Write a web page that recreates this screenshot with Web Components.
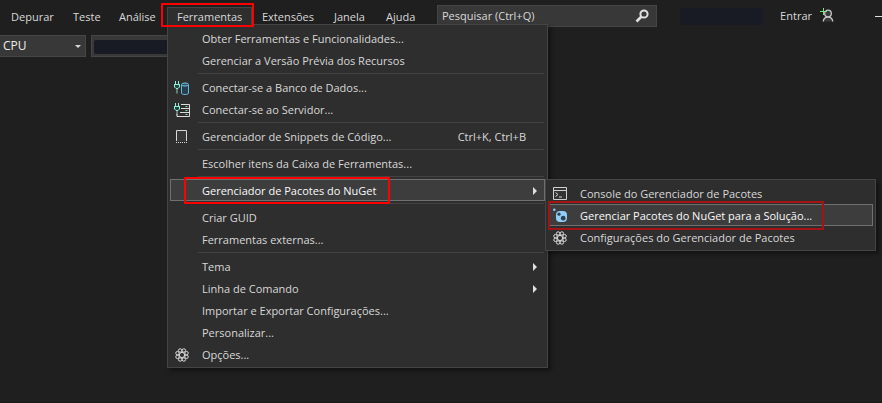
<!DOCTYPE html>
<html lang="pt-BR">
<head>
<meta charset="utf-8">
<title>Ferramentas</title>
<style>
  body {
    margin: 0;
    min-height: 100vh;
    background: #1f1f1f;
    color: #d8d8d8;
    font: 11px/16px "Open Sans", "Noto Sans", sans-serif;
    overflow: hidden;
  }
</style>
</head>
<body>
<ide-window></ide-window>

<script>
const GEAR = (() => {
  let s = '';
  for (let i = 0; i < 8; i++) {
    const a = (i + .5) * Math.PI / 4;
    s += `<circle cx="${(8 + 4.9 * Math.cos(a)).toFixed(2)}" cy="${(8 + 4.9 * Math.sin(a)).toFixed(2)}" r="1.7"/>`;
  }
  return `<g fill="none" stroke="#dcdcdc" stroke-width="1">${s}<circle cx="8" cy="8" r="2.6"/></g>`;
})();

const PLUG = '<path d="M1.500 1v3M4.500 1v3" stroke="#8ff0da" fill="none"/><path d="M0 4.500h6M.5 4.500v2.500l1.500 1.500h2l1.500-1.500v-2.500" stroke="#8ff0da" fill="#23453f"/><path d="M3 8.500v5" stroke="#9cc8c0" fill="none"/>';

const ICONS = {
  database: PLUG + '<path d="M7.500 5v8c0 1 1.500 1.500 3.500 1.500s3.500-.5 3.500-1.500v-8" fill="#23404f" stroke="#6cb8dd"/><ellipse cx="11" cy="4.500" rx="3.500" ry="1.500" fill="#2a5062" stroke="#78c8ee"/>',
  server: PLUG + '<path d="M7 2.500h8.500v12H3M7 6.500h8.500M6 10.500h9.500M3 12v2.500" fill="none" stroke="#dcdcdc"/><path d="M11.500 4.500h2M11.500 8.500h2M11.500 12.500h2" stroke="#8adf9a"/>',
  snippet: '<path d="M2.500 12V1.500h10V12" fill="#383838" stroke="#d8d8d8"/><path d="M2 13.500h11" stroke="#d8d8d8" stroke-dasharray="1 1"/>',
  console: '<path d="M1.500 1.500h13v12h-13z" fill="#333" stroke="#d0d0d0"/><path d="M1.500 4.500h13" stroke="#d0d0d0"/><path d="M3.500 6.500l2.500 2-2.500 2M7 11h3" fill="none" stroke="#d0d0d0"/>',
  nuget: '<circle cx="2.300" cy="1.800" r="1.300" fill="#8cc8f0"/><rect x="4" y="3" width="11" height="11" rx="4" fill="#92cdfa"/><circle cx="7" cy="6.200" r="1.600" fill="#30404c"/><circle cx="11.200" cy="10.200" r="2.400" fill="#30404c"/>',
  gear: GEAR,
  search: '<circle cx="10" cy="6" r="3.600" fill="none" stroke="#e0e0e0" stroke-width="2"/><path d="M7.500 8.500L2.500 13.500" stroke="#e0e0e0" stroke-width="2.600"/>',
  user: '<circle cx="8" cy="5.500" r="3.300" fill="#3a3a3a" stroke="#c8c8c8" stroke-width="1.300"/><path d="M3.200 13.500c.3-2.800 1.800-4.400 4.800-4.400s4.500 1.600 4.800 4.400" fill="#3a3a3a" stroke="#c8c8c8" stroke-width="1.300"/><path d="M3.500 0v7M0 3.500h7" stroke="#7fe08a"/>',
  minimize: '<path d="M1 8.500h15" stroke="#e0e0e0"/>'
};

class Base extends HTMLElement {
  constructor() {
    super();
    this.attachShadow({ mode: 'open' });
  }
  connectedCallback() {
    this.shadowRoot.innerHTML = this.render();
  }
}

customElements.define('ide-icon', class extends Base {
  render() {
    return `<style>:host{display:block;width:16px;height:16px}svg{display:block}</style>
      <svg width="16" height="16" viewBox="0 0 16 16" aria-hidden="true">${ICONS[this.getAttribute('name')] || ''}</svg>`;
  }
});

/* Red outline drawn around the slotted content. */
customElements.define('mark-box', class extends Base {
  render() {
    return `<style>
      :host{display:inline-block;position:relative}
      :host::after{content:"";position:absolute;inset:var(--inset);border:2px solid var(--mark,#f00);z-index:3;pointer-events:none}
    </style><slot></slot>`;
  }
});

customElements.define('menu-separator', class extends Base {
  render() {
    return `<style>:host{display:block;height:1px;margin:2px 1px 2px 28px;background:#434343}</style>`;
  }
});

customElements.define('menu-panel', class extends Base {
  render() {
    return `<style>
      :host{display:block;box-sizing:border-box;padding:2px;background:#2e2e2e;border:1px solid #454545;box-shadow:3px 3px 4px #0006}
    </style><div role="menu"><slot></slot></div>`;
  }
});

customElements.define('menu-item', class extends Base {
  render() {
    const icon = this.getAttribute('icon');
    const keys = this.getAttribute('keys');
    return `<style>
      :host{display:block;position:relative}
      button{all:unset;box-sizing:border-box;width:100%;height:22px;display:grid;grid-template-columns:24px 1fr auto 18px;align-items:center;padding:1px 0 0 3px;border:1px solid transparent;font:inherit;color:inherit;white-space:nowrap;cursor:default}
      .label{padding-left:4px}
      .end{display:grid;place-items:center}
      .arrow{width:0;height:0;border:4px solid transparent;border-left-color:#e0e0e0;border-right:0}
      :host([active]) button{background:#3d3d3d;border-color:#707070;color:#fafafa}
      ::slotted(menu-panel){position:absolute;left:100%;top:0;z-index:2;width:331px}
    </style>
    <button role="menuitem" ${this.hasAttribute('sub') ? 'aria-haspopup="true"' : ''}>
      ${icon ? `<ide-icon name="${icon}"></ide-icon>` : '<span></span>'}
      <span class="label"><slot></slot></span>
      <span class="keys">${keys || ''}</span>
      <span class="end">${this.hasAttribute('sub') ? '<span class="arrow"></span>' : ''}</span>
    </button>
    <slot name="panel"></slot>`;
  }
});

customElements.define('bar-item', class extends Base {
  render() {
    return `<style>
      :host{display:block;position:relative}
      button{all:unset;box-sizing:border-box;display:block;width:100%;height:18px;padding-left:10px;border-top:1px solid transparent;font:inherit;line-height:15px;color:inherit;cursor:default}
      :host([open]) button{position:relative;z-index:2;border:1px solid #454545;border-bottom:0;padding-left:9px;background:#2e2e2e}
      :host([open])::after{content:"";position:absolute;inset:-4px -2px -2px -6px;border:2px solid #f00;z-index:3;pointer-events:none}
      ::slotted(menu-panel){position:absolute;left:0;top:17px;z-index:1;width:381px}
    </style>
    <button role="menuitem"><slot></slot></button><slot name="panel"></slot>`;
  }
});

customElements.define('search-box', class extends Base {
  render() {
    return `<style>
      :host{box-sizing:border-box;display:flex;align-items:center;width:220px;height:22px;background:#383838;border:1px solid #444}
      input{all:unset;flex:1;min-width:0;padding-left:4px;font:inherit;color:inherit}
      input::placeholder{color:#d8d8d8;opacity:1}
      button{all:unset;margin-right:6px}
    </style>
    <input type="search" aria-label="Pesquisar" placeholder="Pesquisar (Ctrl+Q)">
    <button aria-label="Pesquisar"><ide-icon name="search"></ide-icon></button>`;
  }
});

customElements.define('tool-select', class extends Base {
  render() {
    return `<style>
      :host{display:block;position:relative;width:86px}
      select{appearance:none;box-sizing:border-box;display:block;width:100%;height:22px;padding:0 0 0 3px;background:#383838;border:1px solid #464646;border-left:0;border-radius:0;color:#eee;font:inherit;font-size:12px}
      :host::after{content:"";position:absolute;right:5px;top:10px;border:3px solid transparent;border-top-color:#d8d8d8;border-bottom:0;pointer-events:none}
    </style>
    <select aria-label="Plataforma"><option>CPU</option></select>`;
  }
});

customElements.define('ide-window', class extends Base {
  render() {
    return `<style>
      :host{display:flex;flex-direction:column;min-height:100vh}
      header{display:flex;align-items:flex-start;height:35px;box-sizing:border-box;padding-top:5px}
      nav{display:grid;grid-template-columns:62px 46px 58px 85px 72px 52px 51px;padding:2px 10px 0 1px}
      .blob{background:#181b24;border-radius:2px}
      header .blob{width:83px;height:17px;margin:3px 0 0 23px}
      .account{display:flex;align-items:center;margin-left:auto;padding-top:3px;white-space:nowrap}
      .account button{all:unset;display:flex;align-items:center;gap:8px;font:inherit}
      .account .min{margin-left:38px;width:8px;overflow:hidden}
      .tools{display:flex;gap:5px}
      .field{box-sizing:border-box;width:120px;height:22px;padding:4px 2px;background:#383838;border:1px solid #464646}
      .field .blob{height:14px}
      footer{margin-top:auto;height:1px;background:#1a1a1a}
    </style>
    <header>
      <nav role="menubar">
        <bar-item>Depurar</bar-item>
        <bar-item>Teste</bar-item>
        <bar-item>Análise</bar-item>
        <bar-item open>Ferramentas
          <menu-panel slot="panel">
            <menu-item>Obter Ferramentas e Funcionalidades...</menu-item>
            <menu-item>Gerenciar a Versão Prévia dos Recursos</menu-item>
            <menu-separator></menu-separator>
            <menu-item icon="database">Conectar-se a Banco de Dados...</menu-item>
            <menu-item icon="server">Conectar-se ao Servidor...</menu-item>
            <menu-separator></menu-separator>
            <menu-item icon="snippet" keys="Ctrl+K, Ctrl+B">Gerenciador de Snippets de Código...</menu-item>
            <menu-separator></menu-separator>
            <menu-item>Escolher itens da Caixa de Ferramentas...</menu-item>
            <menu-separator></menu-separator>
            <menu-item active sub><mark-box style="--inset:-6px -14px -5px -18px">Gerenciador de Pacotes do NuGet</mark-box>
              <menu-panel slot="panel">
                <menu-item icon="console">Console do Gerenciador de Pacotes</menu-item>
                <menu-item icon="nuget" active><mark-box style="--inset:-7px -12px -6px -32px;--mark:#a31515">Gerenciar Pacotes do NuGet para a Solução...</mark-box></menu-item>
                <menu-item icon="gear">Configurações do Gerenciador de Pacotes</menu-item>
              </menu-panel>
            </menu-item>
            <menu-separator></menu-separator>
            <menu-item>Criar GUID</menu-item>
            <menu-item>Ferramentas externas...</menu-item>
            <menu-separator></menu-separator>
            <menu-item sub>Tema</menu-item>
            <menu-item sub>Linha de Comando</menu-item>
            <menu-item>Importar e Exportar Configurações...</menu-item>
            <menu-item>Personalizar...</menu-item>
            <menu-item icon="gear">Opções...</menu-item>
          </menu-panel>
        </bar-item>
        <bar-item>Extensões</bar-item>
        <bar-item>Janela</bar-item>
        <bar-item>Ajuda</bar-item>
      </nav>
      <search-box></search-box>
      <div class="blob"></div>
      <div class="account">
        <button>Entrar <ide-icon name="user"></ide-icon></button>
        <button class="min" aria-label="Minimizar"><ide-icon name="minimize"></ide-icon></button>
      </div>
    </header>
    <div class="tools">
      <tool-select></tool-select>
      <div class="field"><div class="blob"></div></div>
    </div>
    <footer></footer>`;
  }
});
</script>
</body>
</html>
